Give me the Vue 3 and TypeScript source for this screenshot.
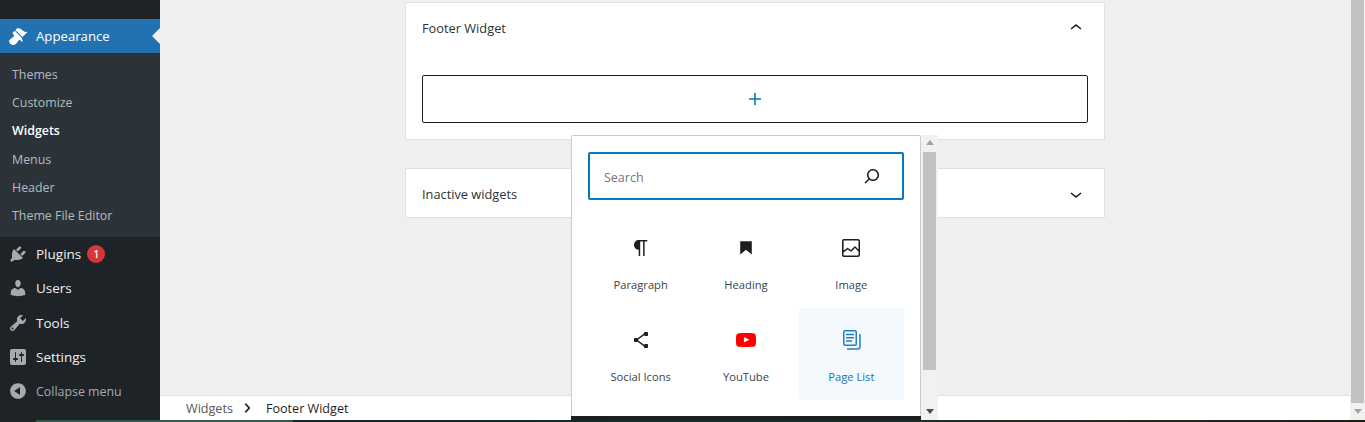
<script setup lang="ts">
const submenu = ['Themes', 'Customize', 'Widgets', 'Menus', 'Header', 'Theme File Editor'];

const adminItems = [
  {
    name: 'Plugins',
    badge: '1',
    d: 'M13.11 4.36L9.87 7.6 8 5.73l3.24-3.24c.35-.34 1.05-.2 1.56.32.52.51.66 1.21.31 1.55zm-8 1.77l.91-1.12 9.01 9.01-1.19.84c-.71.71-2.63 1.16-3.82 1.16H6.14L4.9 17.26c-.59.59-1.54.59-2.12 0-.59-.58-.59-1.53 0-2.12l1.24-1.24v-3.88c0-1.13.4-3.19 1.09-3.89zm7.26 3.97l3.24-3.24c.34-.35 1.04-.21 1.55.31.52.51.66 1.21.31 1.55l-3.24 3.25z',
  },
  {
    name: 'Users',
    d: 'M10 9.25c-2.27 0-2.73-3.44-2.73-3.44C7 4.02 7.82 2 9.97 2c2.16 0 2.98 2.02 2.71 3.81 0 0-.41 3.44-2.68 3.44zm0 2.57L12.72 10c2.39 0 4.52 2.33 4.52 4.53v2.49s-3.65 1.13-7.24 1.13c-3.65 0-7.24-1.13-7.24-1.13v-2.49c0-2.25 1.94-4.48 4.47-4.48z',
  },
  {
    name: 'Tools',
    d: 'M16.68 9.77c-1.34 1.34-3.3 1.67-4.95.99l-5.41 6.52c-.99.99-2.59.99-3.58 0s-.99-2.59 0-3.57l6.52-5.42c-.68-1.65-.35-3.61.99-4.95 1.28-1.28 3.12-1.62 4.72-1.06l-2.89 2.89 2.82 2.82 2.86-2.87c.53 1.58.18 3.39-1.08 4.65zM3.81 16.21c.4.39 1.04.39 1.43 0 .4-.4.4-1.04 0-1.43-.39-.4-1.03-.4-1.43 0-.39.39-.39 1.03 0 1.43z',
  },
  {
    name: 'Settings',
    d: 'M18 16V4c0-1.1-.9-2-2-2H4c-1.1 0-2 .9-2 2v12c0 1.1.9 2 2 2h12c1.1 0 2-.9 2-2zM8 11h1c.55 0 1 .45 1 1s-.45 1-1 1H8v1.5c0 .28-.22.5-.5.5s-.5-.22-.5-.5V13H6c-.55 0-1-.45-1-1s.45-1 1-1h1V5.5c0-.28.22-.5.5-.5s.5.22.5.5V11zm5-2h-1c-.55 0-1-.45-1-1s.45-1 1-1h1V5.5c0-.28.22-.5.5-.5s.5.22.5.5V7h1c.55 0 1 .45 1 1s-.45 1-1 1h-1v5.5c0 .28-.22.5-.5.5s-.5-.22-.5-.5V9z',
  },
];

const blocks = [
  {
    name: 'Paragraph',
    d: 'M18.3 4H9.9v-.1l-.9.2c-2.3.4-4 2.4-4 4.8s1.7 4.4 4 4.8l.7.1V20h1.5V5.5h2.9V20h1.5V5.5h2.7V4z',
  },
  { name: 'Heading', d: 'M6.2 5.2v13.4l5.8-4.8 5.8 4.8V5.2z' },
  {
    name: 'Image',
    d: 'M19 3H5c-1.1 0-2 .9-2 2v14c0 1.1.9 2 2 2h14c1.1 0 2-.9 2-2V5c0-1.1-.9-2-2-2zM5 4.5h14c.3 0 .5.2.5.5v8.4l-3-2.9c-.3-.3-.8-.3-1 0L11.9 14 9 12c-.3-.2-.6-.2-.8 0l-3.6 2.6V5c-.1-.3.1-.5.4-.5zm14 15H5c-.3 0-.5-.2-.5-.5v-2.4l4.1-3 3 1.9c.3.2.7.2.9-.1L16 12l3.5 3.4V19c0 .3-.2.5-.5.5z',
  },
  {
    name: 'Social Icons',
    d: 'M9 11.8l6.1-4.5c.1.4.4.7.9.7h2c.6 0 1-.4 1-1V5c0-.6-.4-1-1-1h-2c-.6 0-1 .4-1 1v.4l-6.4 4.8c-.2-.1-.4-.2-.6-.2H6c-.6 0-1 .4-1 1v2c0 .6.4 1 1 1h2c.2 0 .4-.1.6-.2l6.4 4.8v.4c0 .6.4 1 1 1h2c.6 0 1-.4 1-1v-2c0-.6-.4-1-1-1h-2c-.5 0-.8.3-.9.7L9 12.2v-.4z',
  },
  {
    name: 'YouTube',
    color: '#ff0000',
    d: 'M21.8 8.001s-.195-1.378-.795-1.985c-.76-.797-1.613-.801-2.004-.847-2.799-.202-6.997-.202-6.997-.202h-.009s-4.198 0-6.997.202c-.39.047-1.242.051-2.003.847-.6.607-.795 1.985-.795 1.985S2 9.62 2 11.238v1.517c0 1.618.2 3.237.2 3.237s.195 1.378.795 1.985c.761.797 1.76.771 2.205.855 1.6.153 6.8.201 6.8.201s4.203-.006 7.001-.209c.391-.047 1.243-.051 2.004-.847.6-.607.795-1.985.795-1.985s.2-1.618.2-3.237v-1.517c0-1.618-.2-3.237-.2-3.237zM9.935 14.594l-.001-5.62 5.404 2.82-5.403 2.8z',
  },
  {
    name: 'Page List',
    active: true,
    d: 'M7 13.8h6v-1.5H7v1.5zM18 16V4c0-1.1-.9-2-2-2H6c-1.1 0-2 .9-2 2v12c0 1.1.9 2 2 2h10c1.1 0 2-.9 2-2zM5.5 16V4c0-.3.2-.5.5-.5h10c.3 0 .5.2.5.5v12c0 .3-.2.5-.5.5H6c-.3 0-.5-.2-.5-.5zM7 10.5h8V9H7v1.5zm0-3.3h8V5.8H7v1.4zM20.2 6v13c0 .7-.6 1.2-1.2 1.2H8v1.5h11c1.5 0 2.7-1.2 2.7-2.8V6h-1.5z',
  },
];
</script>

<template>
  <div class="page">
    <div class="window">
      <nav class="sidebar">
        <div class="menu-item current">
          <svg class="dash" viewBox="0 0 20 20">
            <path d="M14.48 11.06L7.41 3.99l1.5-1.5c.5-.56 2.3-.47 3.51.32 1.21.8 1.43 1.28 2.91 2.1 1.18.64 2.45 1.26 4.45.85zm-.71.71L6.7 4.7 4.93 6.47c-.39.39-.39 1.02 0 1.41l1.06 1.06c.39.39.39 1.03 0 1.42-.6.6-1.43 1.11-2.21 1.69-.35.26-.7.53-1.01.84C1.43 13.23.1 15.5 2.39 17.79c2.28 2.29 4.56.96 5.91-.39.31-.31.58-.66.84-1.01.58-.78 1.09-1.61 1.69-2.21.39-.39 1.02-.39 1.41 0l1.06 1.06c.39.39 1.02.39 1.41 0z" />
          </svg>
          <span>Appearance</span>
          <i class="notch"></i>
        </div>
        <ul class="submenu">
          <li v-for="item in submenu" :key="item" :class="{ on: item === 'Widgets' }">{{ item }}</li>
        </ul>
        <div v-for="item in adminItems" :key="item.name" class="menu-item">
          <svg class="dash" viewBox="0 0 20 20"><path :d="item.d" /></svg>
          <span>{{ item.name }}</span>
          <b v-if="item.badge" class="badge">{{ item.badge }}</b>
        </div>
        <div class="menu-item collapse">
          <svg class="dash" viewBox="0 0 20 20">
            <path d="M10 2.16c4.33 0 7.84 3.51 7.84 7.84s-3.51 7.84-7.84 7.84S2.16 14.33 2.16 10 5.71 2.16 10 2.16zm2 11.72V6.12L6.18 9.97z" />
          </svg>
          <span>Collapse menu</span>
        </div>
      </nav>

      <main class="main">
        <div class="content">
          <section class="card open">
            <header class="card-head">
              <h2>Footer Widget</h2>
              <svg class="chev" viewBox="0 0 24 24"><path d="M6.5 12.4L12 8l5.5 4.4-.9 1.2L12 10l-4.5 3.6-1-1.2z" /></svg>
            </header>
            <div class="appender">
              <svg viewBox="0 0 24 24"><path d="M18 11.2h-5.2V6h-1.6v5.2H6v1.6h5.2V18h1.6v-5.2H18z" /></svg>
            </div>
          </section>
          <section class="card">
            <header class="card-head">
              <h2>Inactive widgets</h2>
              <svg class="chev" viewBox="0 0 24 24"><path d="M17.5 11.6L12 16l-5.5-4.4.9-1.2L12 14l4.5-3.6 1 1.2z" /></svg>
            </header>
          </section>
        </div>

        <footer class="crumbs">
          <span class="crumb-first">Widgets</span>
          <svg viewBox="0 0 24 24"><path d="M10.6 6L9.4 7l4.6 5-4.6 5 1.2 1 5.4-6z" /></svg>
          <span>Footer Widget</span>
        </footer>

        <div class="inserter">
          <div class="panel">
            <div class="panel-body">
              <div class="search">
                <span>Search</span>
                <svg viewBox="0 0 24 24"><path d="M13 5c-3.3 0-6 2.7-6 6 0 1.4.5 2.7 1.3 3.7l-3.8 3.8 1.1 1.1 3.8-3.8c1 .8 2.3 1.3 3.7 1.3 3.3 0 6-2.7 6-6S16.3 5 13 5zm0 10.5c-2.5 0-4.5-2-4.5-4.5s2-4.5 4.5-4.5 4.5 2 4.5 4.5-2 4.5-4.5 4.5z" /></svg>
              </div>
              <div class="blocks">
                <div v-for="block in blocks" :key="block.name" class="block" :class="{ active: block.active }">
                  <svg viewBox="0 0 24 24" fill-rule="evenodd" :style="block.color ? { fill: block.color } : undefined">
                    <path :d="block.d" />
                  </svg>
                  <span>{{ block.name }}</span>
                </div>
              </div>
            </div>
            <div class="panel-end"></div>
          </div>
          <div class="scrollbar small">
            <i class="arrow up"></i>
            <div class="thumb"></div>
            <i class="arrow down"></i>
          </div>
        </div>
      </main>

      <div class="scrollbar page-bar">
        <div class="thumb"></div>
        <i class="arrow down"></i>
      </div>
    </div>
    <div class="taskbar"></div>
  </div>
</template>

<style>
  html,
  body {
    margin: 0;
    overflow: hidden;
  }
</style>

<style scoped>
  .page {
    width: 1365px;
    height: 422px;
    overflow: hidden;
    font-family: 'Open Sans', 'Noto Sans', sans-serif;
    color: #1e1e1e;
  }

  .window {
    display: flex;
    height: 420px;
  }

  .taskbar {
    height: 2px;
    background: linear-gradient(90deg, #1d2327 36px, #2f5a49 36px, #2f5a49 293px, #10262b 293px, #12302f 60%, #2a2a20 80%, #1c1c16);
  }

  .sidebar {
    width: 160px;
    flex: none;
    padding-top: 19px;
    box-sizing: border-box;
    background: #1d2327;
    color: #f0f0f1;
  }

  .menu-item {
    position: relative;
    display: flex;
    align-items: center;
    height: 34.2px;
    padding-left: 36px;
    font-size: 13.5px;
  }

  .dash {
    position: absolute;
    left: 8px;
    top: 7px;
    width: 20px;
    height: 20px;
    fill: #a7aaad;
  }

  .current {
    height: 34px;
    background: #2271b1;
    color: #fff;
    font-size: 13.2px;
  }

  .current .dash {
    fill: #fff;
  }

  .notch {
    position: absolute;
    right: 0;
    top: 9px;
    border: 8px solid transparent;
    border-left-width: 0;
    border-right-color: #f0f0f0;
  }

  .collapse {
    padding-top: 1px;
    box-sizing: border-box;
    color: #a7aaad;
    font-size: 12.4px;
  }

  .badge {
    display: flex;
    align-items: center;
    justify-content: center;
    width: 18px;
    height: 18px;
    margin-left: 6px;
    border-radius: 50%;
    background: #d63638;
    color: #fff;
    font-size: 10px;
    font-weight: 600;
  }

  .submenu {
    margin: 0;
    padding: 8px 0 7px;
    list-style: none;
    background: #2c3338;
    color: rgba(240, 246, 252, 0.7);
    font-size: 12.4px;
  }

  .submenu li {
    padding-left: 12px;
    height: 28.2px;
    line-height: 28.2px;
  }

  .submenu .on {
    color: #fff;
    font-weight: 600;
  }

  .main {
    position: relative;
    display: flex;
    flex: 1;
    flex-direction: column;
    min-width: 0;
    background: #efefef;
  }

  .content {
    flex: 1;
    width: 700px;
    margin: 0 auto;
    padding-top: 2px;
  }

  .card {
    margin-bottom: 28px;
    box-sizing: border-box;
    height: 50px;
    border: 1px solid #e0e0e0;
    background: #fff;
  }

  .card.open {
    height: 138px;
  }

  .card-head {
    display: flex;
    align-items: center;
    justify-content: space-between;
    height: 48px;
    padding: 2px 16px 0;
    box-sizing: border-box;
  }

  .open .card-head {
    height: 50px;
    padding-top: 0;
  }

  h2 {
    margin: 0;
    font-size: 12.8px;
    font-weight: 500;
    color: #2c3338;
  }

  .chev {
    width: 24px;
    height: 24px;
    fill: #1e1e1e;
  }

  .appender {
    display: flex;
    align-items: center;
    justify-content: center;
    height: 48px;
    margin: 22px 16px 0;
    box-sizing: border-box;
    border: 1px solid #1e1e1e;
    border-radius: 2px;
  }

  .appender svg {
    width: 24px;
    height: 24px;
    fill: #007cba;
  }

  .crumbs {
    display: flex;
    align-items: center;
    height: 25px;
    padding-left: 26px;
    box-sizing: border-box;
    border-top: 1px solid #e0e0e0;
    background: #fff;
    font-size: 12.6px;
  }

  .crumb-first {
    color: #50575e;
  }

  .crumbs svg {
    width: 18px;
    height: 18px;
    margin: 0 10px 0 5px;
    fill: #1e1e1e;
    stroke: #1e1e1e;
    stroke-width: 1;
  }

  .inserter {
    position: absolute;
    left: 411px;
    top: 135px;
    display: flex;
    width: 367px;
    height: 285px;
  }

  .panel {
    display: flex;
    flex: 1;
    flex-direction: column;
    min-width: 0;
    box-sizing: border-box;
    border: 1px solid #ccc;
    border-bottom: 0;
    border-radius: 2px 2px 0 0;
    background: #fff;
  }

  .panel-body {
    flex: 1;
    padding: 16px;
  }

  .panel-end {
    height: 4px;
    margin: 0 -1px;
    background: #1e1e1e;
  }

  .search {
    display: flex;
    align-items: center;
    justify-content: space-between;
    height: 48px;
    padding: 0 18px 0 14px;
    box-sizing: border-box;
    border: 2px solid #007cba;
    border-radius: 2px;
    color: #757575;
    font-size: 12.5px;
  }

  .search span {
    margin-top: 2px;
  }

  .search svg {
    width: 24px;
    height: 24px;
    fill: #1e1e1e;
  }

  .blocks {
    display: grid;
    grid-template-columns: repeat(3, 1fr);
    grid-auto-rows: 92px;
    margin-top: 16px;
  }

  .block {
    display: flex;
    flex-direction: column;
    align-items: center;
    padding-top: 20px;
    box-sizing: border-box;
    border-radius: 2px;
    font-size: 11.2px;
    color: #3c434a;
  }

  .block svg {
    width: 24px;
    height: 24px;
    margin-bottom: 16px;
    fill: #1e1e1e;
  }

  .block span {
    line-height: 18px;
  }

  .block.active {
    background: #f3f9fc;
    color: #2271b1;
  }

  .block.active svg {
    fill: #2080bd;
  }

  .scrollbar {
    position: relative;
    flex: none;
    box-sizing: border-box;
    width: 17px;
    background: #f1f1f1;
  }

  .scrollbar .thumb {
    position: absolute;
    left: 2px;
    width: 13px;
    background: #c1c1c1;
  }

  .small .thumb {
    top: 17px;
    height: 218px;
  }

  .page-bar {
    width: 15px;
  }

  .page-bar .thumb {
    left: 1px;
    top: 0;
    width: 13px;
    height: 403px;
  }

  .arrow {
    position: absolute;
    left: 5px;
    border: 4px solid transparent;
  }

  .arrow.up {
    top: 5px;
    border-top-width: 0;
    border-bottom: 5px solid #a3a3a3;
  }

  .arrow.down {
    bottom: 6px;
    border-bottom-width: 0;
    border-top: 5px solid #505050;
  }

  .page-bar .arrow {
    left: 4px;
    border-top-color: #a3a3a3;
  }
</style>
